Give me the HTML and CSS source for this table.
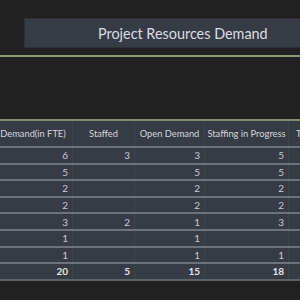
FILE: index.html
```
<!DOCTYPE html>
<html>
<head>
<meta charset="utf-8">
<link rel="stylesheet" href="styles.css">
</head>
<body>
<div class="page">
  <div class="title-box"><span class="title">Project Resources Demand</span></div>
  <div class="rule"></div>
  <div class="table">
    <div class="row head">
      <div class="cell">Demand(in FTE)</div>
      <div class="cell">Staffed</div>
      <div class="cell">Open Demand</div>
      <div class="cell">Staffing in Progress</div>
      <div class="cell cell-left">Total</div>
    </div>
    <div class="row"><div class="cell">6</div><div class="cell">3</div><div class="cell">3</div><div class="cell">5</div><div class="cell"></div></div>
    <div class="row"><div class="cell">5</div><div class="cell"></div><div class="cell">5</div><div class="cell">5</div><div class="cell"></div></div>
    <div class="row"><div class="cell">2</div><div class="cell"></div><div class="cell">2</div><div class="cell">2</div><div class="cell"></div></div>
    <div class="row"><div class="cell">2</div><div class="cell"></div><div class="cell">2</div><div class="cell">2</div><div class="cell"></div></div>
    <div class="row"><div class="cell">3</div><div class="cell">2</div><div class="cell">1</div><div class="cell">3</div><div class="cell"></div></div>
    <div class="row"><div class="cell">1</div><div class="cell"></div><div class="cell">1</div><div class="cell"></div><div class="cell"></div></div>
    <div class="row"><div class="cell">1</div><div class="cell"></div><div class="cell">1</div><div class="cell">1</div><div class="cell"></div></div>
    <div class="row total"><div class="cell">20</div><div class="cell">5</div><div class="cell">15</div><div class="cell">18</div><div class="cell"></div></div>
  </div>
</div>
</body>
</html>
```
FILE: styles.css
```
html, body {
  margin: 0;
  padding: 0;
  background: #212121;
  width: 300px;
  height: 300px;
  overflow: hidden;
}
.page {
  padding-top: 18px;
  font-family: "Lato", "Noto Sans", sans-serif;
  color: #d6d8dc;
}
.title-box {
  margin-left: 24px;
  width: 320px;
  height: 30px;
  box-sizing: border-box;
  background: #363b46;
  border: 1px solid #2c3038;
  display: flex;
  align-items: center;
  padding-left: 73px;
}
.title {
  font-size: 14.4px;
  color: #dcdde0;
  white-space: nowrap;
}
.rule {
  margin-top: 7px;
  height: 2px;
  background: #8a9e6d;
}
.table {
  margin-top: 62px;
  margin-left: -6px;
  width: 340px;
  background: #363b46;
  border-top: 2px solid #7d8d6a;
  font-size: 10px;
}
.row {
  display: grid;
  grid-template-columns: 79px 62px 70px 84px 1fr;
  height: 14.6px;
  border-bottom: 2px solid #6d727c;
}
.row .cell {
  display: flex;
  align-items: center;
  justify-content: flex-end;
  padding-right: 4px;
  border-right: 1px solid #3f4450;
  white-space: nowrap;
  color: #c9cbd0;
}
.row.head {
  height: 25px;
}
.row.head .cell {
  justify-content: center;
  padding: 0 2px;
  color: #d4d6da;
  font-size: 9.3px;
}
.row.head .cell-left {
  justify-content: flex-start;
  padding-left: 7px;
}
.row.total {
  border-bottom-color: #5f636b;
}
.row.total .cell {
  font-weight: 700;
  color: #e4e5e8;
}
```
